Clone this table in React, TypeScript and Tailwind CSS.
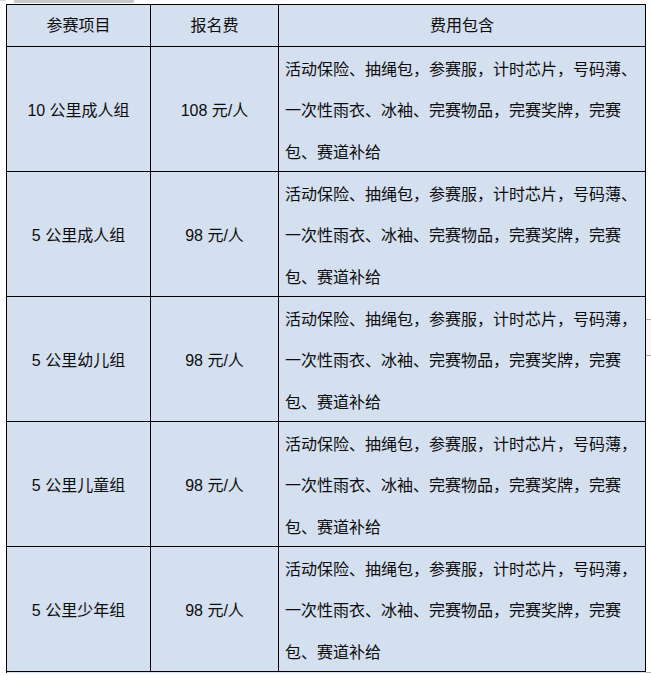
import React from "react";

const rows = [
  { name: "10 公里成人组", fee: "108 元/人", lines: ["活动保险、抽绳包，参赛服，计时芯片，号码薄、", "一次性雨衣、冰袖、完赛物品，完赛奖牌，完赛", "包、赛道补给"] },
  { name: "5 公里成人组", fee: "98 元/人", lines: ["活动保险、抽绳包，参赛服，计时芯片，号码薄、", "一次性雨衣、冰袖、完赛物品，完赛奖牌，完赛", "包、赛道补给"] },
  { name: "5 公里幼儿组", fee: "98 元/人", lines: ["活动保险、抽绳包，参赛服，计时芯片，号码薄，", "一次性雨衣、冰袖、完赛物品，完赛奖牌，完赛", "包、赛道补给"] },
  { name: "5 公里儿童组", fee: "98 元/人", lines: ["活动保险、抽绳包，参赛服，计时芯片，号码薄，", "一次性雨衣、冰袖、完赛物品，完赛奖牌，完赛", "包、赛道补给"] },
  { name: "5 公里少年组", fee: "98 元/人", lines: ["活动保险、抽绳包，参赛服，计时芯片，号码薄，", "一次性雨衣、冰袖、完赛物品，完赛奖牌，完赛", "包、赛道补给"] },
];

export default function App() {
  return (
    <div
      className="w-[651px] h-[675px] bg-white text-[#0d0d0d] overflow-hidden"
      style={{ fontFamily: '"Liberation Sans", "Noto Sans CJK SC", sans-serif' }}
    >
      <div className="h-[4px] flex">
        <div className="w-[6px] h-[1px] bg-[#d8d8d8]" />
        <div className="ml-[8px] w-[120px] h-[3px] bg-[#c8c8c8]" />
      </div>
      <div className="flex">
        <div className="ml-[6px] w-[640px] border-l border-t border-black bg-[#d4dfef] flex flex-col">
          <div className="flex h-[42px] text-[16px]">
            <div className="w-[144px] border-r border-b border-black flex items-center justify-center">参赛项目</div>
            <div className="w-[128px] border-r border-b border-black flex items-center justify-center">报名费</div>
            <div className="w-[367px] border-r border-b border-black flex items-center justify-center">费用包含</div>
          </div>
          {rows.map((r, i) => (
            <div key={i} className="flex h-[125px] text-[16px]">
              <div className="w-[144px] border-r border-b border-black flex items-center justify-center pt-[4px]">{r.name}</div>
              <div className="w-[128px] border-r border-b border-black flex items-center justify-center pt-[4px]">{r.fee}</div>
              <div className="w-[367px] border-r border-b border-black flex flex-col justify-center pl-[6px] pt-[4px] leading-[41.5px]">
                {r.lines.map((l, j) => (
                  <div key={j} className="whitespace-nowrap">{l}</div>
                ))}
              </div>
            </div>
          ))}
        </div>
        <div className="flex flex-col w-[5px]">
          <div className="h-[315px]" />
          <div className="h-[37px] border-t border-b border-[#b0b0b0] bg-[#f8f8f8]" />
          <div className="h-[316px]" />
          <div className="h-[1px] bg-[#b0b0b0]" />
        </div>
      </div>
    </div>
  );
}
